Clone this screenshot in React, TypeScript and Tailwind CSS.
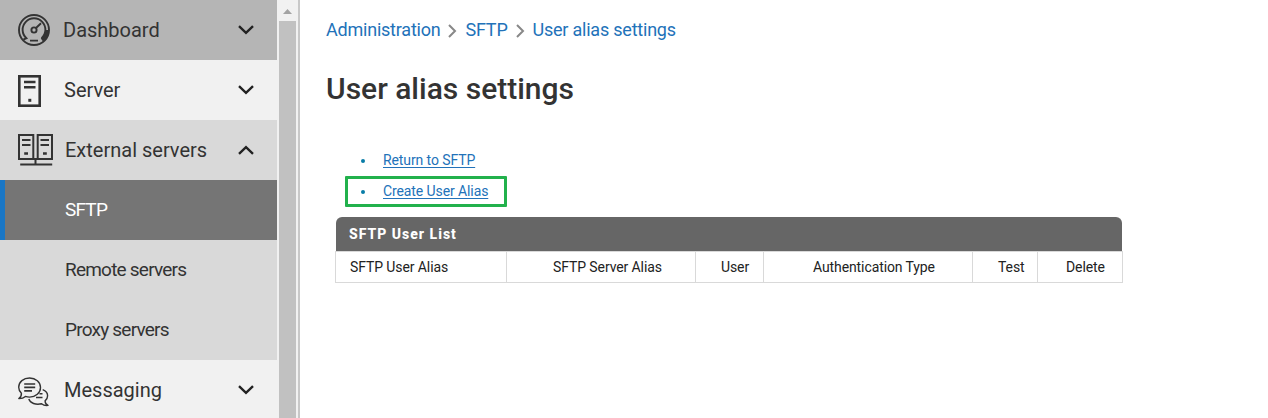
import React from "react";

type IconProps = { className?: string };

function GaugeIcon() {
  return (
    <svg width="32" height="32" viewBox="0 0 32 32" fill="none" stroke="#333" strokeWidth="1.9">
      <circle cx="16" cy="16" r="15" />
      <path d="M5.4 25.6 8.4 24.2A11.4 11.4 0 1 1 23.6 24.2" />
      <path d="M27.2 16h4A15 15 0 0 1 25 27.6L22.8 24.6A12 12 0 0 0 27.2 16Z" fill="#333" stroke="none" />
      <circle cx="16" cy="16" r="2.6" />
      <path d="M18 14 23 9.2M12 26.6h8" />
    </svg>
  );
}

function ServerIcon() {
  return (
    <svg className="mt-[2px]" width="23" height="32" viewBox="0 0 23 32" fill="none" stroke="#333">
      <rect x="1.3" y="1.3" width="20.4" height="29.4" strokeWidth="2.6" />
      <path d="M6 7h11.5M6 12.3h11.5" strokeWidth="2.4" />
      <path d="M10.3 25.3h3" strokeWidth="3" />
    </svg>
  );
}

function ServersIcon() {
  return (
    <svg width="35" height="32" viewBox="0 0 35 32" fill="none" stroke="#333" strokeWidth="2">
      <rect x="1" y="1" width="14.3" height="24" />
      <rect x="19.7" y="1" width="14.3" height="24" />
      <path d="M4 6h8.5M4 11h8.5M22.5 6H31M22.5 11H31" />
      <path d="M6.2 19.5H10M25 19.5h3.8" strokeWidth="2.3" />
      <path d="M15 25h5M17.5 24v6M2.2 30.4h32" />
    </svg>
  );
}

function ChatIcon() {
  return (
    <svg className="mt-[3px]" width="31" height="30" viewBox="0 0 31 30" fill="none" stroke="#333" strokeWidth="1.4" strokeLinejoin="round">
      <path d="M3.4 16.3C1.6 14.5.7 12.6.7 10.3.7 4.9 5.5 1 11.6 1s10.9 4 10.9 9.4-4.8 9.7-10.9 9.7c-1.6 0-2.8-.2-4.2-.7-1.7 1.5-3.8 2.2-6.6 2.1C2.8 20.2 3.6 18.4 3.4 16.3Z" />
      <path d="M24.7 12.6c3 1.1 4.9 3.4 4.9 6.2 0 2-.9 3.8-2.5 5.1 0 2.2 1 3.6 2.9 4.5-2.5.4-4.7-.2-6.4-1.6-5.8 1.4-11.4-.6-12.8-4.8" />
      <path d="M6.2 7h11M6.2 10.4h11M6.2 13.8H14" strokeWidth="1.7" />
      <path d="M21.5 16.8h3M18 20.5h6.5" />
    </svg>
  );
}

function Chevron({ className }: IconProps) {
  return (
    <svg className={className} width="16" height="10" viewBox="0 0 16 10" fill="none" stroke="#222" strokeWidth="2.4">
      <path d="m1 1.2 7 6.6 7-6.6" />
    </svg>
  );
}

function MenuRow({ icon, label, bg, text, open }: { icon: React.ReactNode; label: string; bg: string; text: string; open?: boolean }) {
  return (
    <div className={`flex h-[60px] shrink-0 items-center pl-[18px] pr-[23px] text-[20px] text-[#333] ${bg}`}>
      {icon}
      <span className={`whitespace-nowrap ${text}`}>{label}</span>
      <Chevron className={open ? "ml-auto rotate-180" : "ml-auto"} />
    </div>
  );
}

function Separator() {
  return (
    <span className="ml-[8px] mr-[8px] pt-[3px]">
      <svg width="9" height="14" viewBox="0 0 9 14" fill="none" stroke="#888" strokeWidth="2">
        <path d="m1 1 6 6-6 6" />
      </svg>
    </span>
  );
}

export default function App() {
  return (
    <div className="flex h-[418px] w-[1268px] overflow-hidden bg-white font-['Roboto',sans-serif]">
      <nav className="flex w-[277px] shrink-0 flex-col">
        <MenuRow icon={<GaugeIcon />} label="Dashboard" bg="bg-[#b5b5b5]" text="ml-[13px]" />
        <MenuRow icon={<ServerIcon />} label="Server" bg="bg-[#f1f1f1]" text="ml-[23px]" />
        <MenuRow icon={<ServersIcon />} label="External servers" bg="bg-[#d9d9d9]" text="ml-[12px]" open />
        <div className="flex h-[60px] shrink-0 items-center border-l-[5px] border-[#1976c5] bg-[#757575] pl-[60px] text-[19px] leading-7 tracking-[-0.8px] text-white">SFTP</div>
        <div className="flex h-[60px] shrink-0 items-center bg-[#d9d9d9] pl-[65px] text-[19px] leading-7 tracking-[-0.78px] text-[#333]">Remote servers</div>
        <div className="flex h-[60px] shrink-0 items-center bg-[#d9d9d9] pl-[65px] text-[19px] leading-7 tracking-[-0.78px] text-[#333]">Proxy servers</div>
        <MenuRow icon={<ChatIcon />} label="Messaging" bg="bg-[#f1f1f1]" text="ml-[15px]" />
      </nav>
      <div className="flex w-[23px] shrink-0 flex-col items-center border-r-2 border-[#c8c8c8] bg-[#f1f1f1]">
        <svg className="mt-[9px] shrink-0" width="9" height="5" viewBox="0 0 9 5" fill="#a3a3a3">
          <path d="M0 5 4.5 0 9 5Z" />
        </svg>
        <div className="mt-[7px] w-[17px] grow bg-[#c1c1c1]" />
      </div>
      <main className="flex grow flex-col pl-[26px]">
        <div className="mt-[17px] flex h-6 items-center text-[18px] tracking-[-0.22px] text-[#2272b9]">
          <a>Administration</a>
          <Separator />
          <a>SFTP</a>
          <Separator />
          <a>User alias settings</a>
        </div>
        <h1 className="mt-[28px] h-10 text-[30px] font-medium leading-10 text-[#333]">User alias settings</h1>
        <ul className="ml-[19px] mt-[36px] flex flex-col text-[14px] leading-5 tracking-[-0.1px] text-[#2272b9]">
          <li className="flex h-[31px] items-center pb-px pl-[16px]">
            <span className="mr-[18px] mt-px size-1 rounded-full bg-[#087ca7]" />
            <a className="underline underline-offset-2">Return to SFTP</a>
          </li>
          <li className="flex h-[31px] w-[162px] items-center rounded-[1px] border-[3px] border-[#22b14c] pb-px pl-[13px]">
            <span className="mr-[18px] mt-px size-1 rounded-full bg-[#087ca7]" />
            <a className="whitespace-nowrap underline underline-offset-2">Create User Alias</a>
          </li>
        </ul>
        <section className="ml-[9px] mt-[10px] w-[788px] text-[14px] tracking-[-0.1px]">
          <h2 className="mx-px flex h-[34px] items-center rounded-t-[6px] bg-[#666] pl-[13px] font-extrabold tracking-[1px] text-white">SFTP User List</h2>
          <div className="grid h-8 grid-cols-[171px_189px_68px_209px_65px_85px] items-stretch border border-[#d9d9d9] text-[#222] [&>div]:flex [&>div]:items-center [&>div]:border-r [&>div]:border-[#d9d9d9] [&>div]:whitespace-nowrap">
            <div className="pl-[14px]">SFTP User Alias</div>
            <div className="pl-[46px]">SFTP Server Alias</div>
            <div className="pl-[25px]">User</div>
            <div className="pl-[49px]">Authentication Type</div>
            <div className="pl-[25px]">Test</div>
            <div className="border-r-0! pl-[28px]">Delete</div>
          </div>
        </section>
      </main>
    </div>
  );
}
